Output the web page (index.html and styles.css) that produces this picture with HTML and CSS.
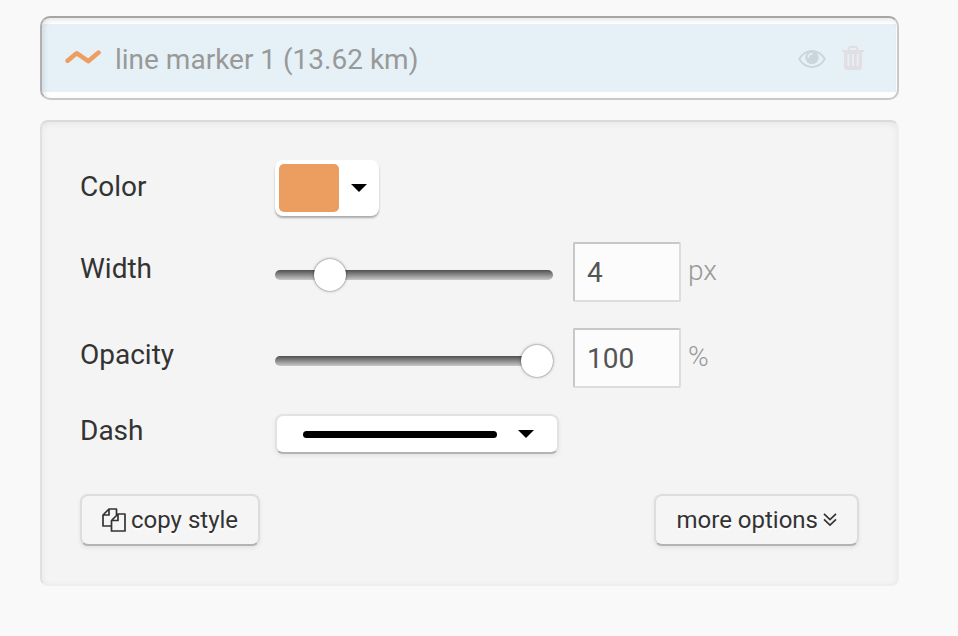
FILE: index.html
```html
<!DOCTYPE html>
<html lang="en">
<head>
<meta charset="utf-8">
<meta name="viewport" content="width=device-width, initial-scale=1">
<title>Marker style</title>
<link rel="stylesheet" href="styles.css">
</head>
<body>
<main class="page">
  <section class="marker-list" aria-label="Markers">
    <div class="marker">
      <svg class="marker-line" viewBox="0 0 36 16" aria-hidden="true"><path d="M2.6 10.800 11.6 3.200 23.2 11.200 33.6 2.600"/></svg>
      <span class="marker-name">line marker 1 (13.62 km)</span>
      <button class="icon-button eye" type="button" aria-label="Toggle visibility">
        <svg width="28" height="24" viewBox="0 0 28 24" aria-hidden="true">
          <path class="outline" d="M1.200 13C4.300 7.600 8.900 4.900 14 4.900s9.700 2.700 12.800 8.100C23.700 18.300 19.100 20.900 14 20.900S4.300 18.300 1.200 13Z"/>
          <circle cx="14" cy="11.400" r="6.700"/>
          <path class="glint" d="M10.200 11.600c0-2.400 1.500-3.900 3.900-3.900"/>
        </svg>
      </button>
      <button class="icon-button trash" type="button" aria-label="Delete marker">
        <svg width="22" height="24" viewBox="0 0 22 24" aria-hidden="true">
          <path fill-rule="evenodd" d="M0 4h5.200l1.200-2.800C6.700.4 7.400 0 8.200 0h5.600c.8 0 1.500.4 1.800 1.200L16.800 4H22v2h-2v15c0 1.700-1.200 3-2.800 3H4.800C3.200 24 2 22.700 2 21V6H0Zm7.400 0h7.200L13.700 2H8.300ZM5.500 8v12h1.700V8Zm4.600 0v12h1.700V8Zm4.700 0v12h1.700V8Z"/>
        </svg>
      </button>
    </div>
  </section>

  <form class="panel">
    <div class="row">
      <label class="label" for="color">Color</label>
      <button class="color-picker" id="color" type="button" aria-haspopup="true">
        <span class="swatch"></span>
        <svg class="caret" viewBox="0 0 16 8" aria-hidden="true"><path d="M0 0h16L8 8Z"/></svg>
      </button>
    </div>
    <div class="row">
      <label class="label" for="width">Width</label>
      <input class="slider" type="range" min="1" max="20" value="4" aria-label="Width slider">
      <input class="number" id="width" type="text" inputmode="numeric" value="4">
      <span class="unit">px</span>
    </div>
    <div class="row">
      <label class="label" for="opacity">Opacity</label>
      <input class="slider" type="range" min="0" max="100" value="100" aria-label="Opacity slider">
      <input class="number" id="opacity" type="text" inputmode="numeric" value="100">
      <span class="unit">%</span>
    </div>
    <div class="row">
      <label class="label label-short" for="dash">Dash</label>
      <div class="dash">
        <select class="dash-select" id="dash"><option value="solid" label=" "></option></select>
        <div class="dash-preview">
          <span class="dash-line"></span>
          <svg class="caret" viewBox="0 0 16 8" aria-hidden="true"><path d="M0 0h16L8 8Z"/></svg>
        </div>
      </div>
    </div>
    <div class="actions">
      <button class="button" type="button">
        <svg class="copy-icon" viewBox="0 0 24 24" aria-hidden="true"><path d="M14.500 6V1H7L1 7v11h8M7 1v6H1M23 6h-7l-6.500 6.500V23H23ZM16 6v6.500H9.500M14.500 5v2.500"/></svg>
        copy style
      </button>
      <button class="button" type="button">
        more options
        <svg class="more-icon" viewBox="0 0 14 14" aria-hidden="true"><path d="m1 .8 6 5.700L13 .8M1 6.300 7 12l6-5.700"/></svg>
      </button>
    </div>
  </form>
</main>
</body>
</html>
```
FILE: styles.css
```css
* {
  box-sizing: border-box;
}

body {
  margin: 0;
  background: #f9f9f9;
  color: #333;
  font: 28px/34px Roboto, sans-serif;
}

button,
input,
select {
  margin: 0;
  font: inherit;
  color: inherit;
}

.page {
  display: flex;
  flex-direction: column;
  gap: 20px;
  padding: 16px 59px 40px 40px;
}

.marker-list {
  position: relative;
  padding: 6px 1px 6px 0;
  border: 2px solid #c9c9c9;
  border-top-color: #a6a6a6;
  border-left-color: #b0b0b0;
  border-radius: 10px;
  background: #fff;
}

.marker-list::after {
  content: "";
  position: absolute;
  inset: 0;
  border-radius: 8px;
  box-shadow: inset 2px 2px 5px rgba(0, 0, 0, 0.1);
  pointer-events: none;
}

.marker {
  display: flex;
  align-items: center;
  height: 68px;
  padding: 0 32px 0 23px;
  background: #e6f1f7;
  color: #999;
}

.marker-line {
  width: 36px;
  height: 16px;
  fill: none;
  stroke: #ed9e60;
  stroke-width: 4.5;
  stroke-linecap: round;
  stroke-linejoin: round;
}

.marker-name {
  flex: 1;
  margin-left: 14px;
  padding-top: 4px;
}

.icon-button {
  display: flex;
  padding: 0;
  border: 0;
  background: none;
}

.eye {
  margin-right: 16px;
  fill: #cbd6dc;
}

.eye .outline {
  fill: none;
  stroke: #cbd6dc;
  stroke-width: 2;
}

.eye .glint {
  fill: none;
  stroke: #e6f1f7;
  stroke-width: 1.5;
  stroke-linecap: round;
}

.trash {
  fill: #e1dfe3;
}

.panel {
  display: flex;
  flex-direction: column;
  gap: 26px;
  padding: 38px;
  border: 2px solid #eee;
  border-top-color: #dadada;
  border-left-color: #e0e0e0;
  border-radius: 8px;
  background: #f4f4f4;
  box-shadow: inset 0 2px 6px rgba(0, 0, 0, 0.06);
}

.row {
  display: flex;
  align-items: flex-start;
}

.label {
  width: 195px;
  line-height: 54px;
}

.label-short {
  line-height: 34px;
}

.color-picker {
  display: flex;
  align-items: center;
  gap: 12px;
  padding: 4px 12px 4px 4px;
  border: 0;
  border-radius: 8px;
  background: #fff;
  box-shadow: 0 2px 2px rgba(0, 0, 0, 0.3);
}

.swatch {
  width: 60px;
  height: 48px;
  border-radius: 5px;
  background: #eb9e60;
}

.caret {
  width: 16px;
  height: 8px;
}

.slider {
  appearance: none;
  width: 278px;
  height: 34px;
  margin: 16px 20px 0 0;
  background: none;
}

.slider::-webkit-slider-runnable-track {
  height: 10px;
  border-radius: 5px;
  background: linear-gradient(#505050, #c8c8c8);
}

.slider::-webkit-slider-thumb {
  appearance: none;
  width: 32px;
  height: 32px;
  margin-top: -11px;
  border: 0;
  border-radius: 50%;
  background: #fff;
  box-shadow: 0 0 2px rgba(0, 0, 0, 0.6), 0 0 4px rgba(0, 0, 0, 0.15);
}

.number {
  width: 108px;
  height: 60px;
  padding: 0 12px;
  border: 2px solid #ddd;
  border-top-color: #c8c8c8;
  border-left-color: #c8c8c8;
  border-radius: 2px;
  background: #fcfcfc;
  color: #555;
}

.unit {
  margin-left: 7px;
  line-height: 58px;
  font-weight: 300;
  color: #999;
}

.dash {
  position: relative;
  width: 284px;
  height: 40px;
}

.dash-select {
  display: block;
  appearance: none;
  width: 100%;
  height: 100%;
  padding: 0;
  border: 2px solid #e2e2e2;
  border-bottom-color: #b3b3b3;
  border-radius: 8px;
  background: #fff;
  box-shadow: 0 2px 4px rgba(0, 0, 0, 0.07);
}

.dash-preview {
  position: absolute;
  inset: 0;
  display: flex;
  align-items: center;
  gap: 21px;
  padding: 0 25px 0 28px;
  pointer-events: none;
}

.dash-line {
  flex: 1;
  height: 7px;
  border-radius: 4px;
  background: #000;
}

.actions {
  display: flex;
  justify-content: space-between;
  margin-top: 14px;
}

.button {
  display: flex;
  align-items: center;
  gap: 5px;
  height: 52px;
  padding: 0 20px;
  border: 2px solid #ddd;
  border-bottom-color: #b3b3b3;
  border-radius: 8px;
  background: #f5f5f5;
  box-shadow: 0 2px 4px rgba(0, 0, 0, 0.07);
  font-size: 24px;
  text-shadow: 0 2px 2px #fff;
}

.copy-icon {
  width: 24px;
  height: 24px;
  fill: none;
  stroke: #333;
  stroke-width: 1.7;
  stroke-linejoin: round;
}

.more-icon {
  width: 14px;
  height: 14px;
  fill: none;
  stroke: #333;
  stroke-width: 1.7;
}
```
